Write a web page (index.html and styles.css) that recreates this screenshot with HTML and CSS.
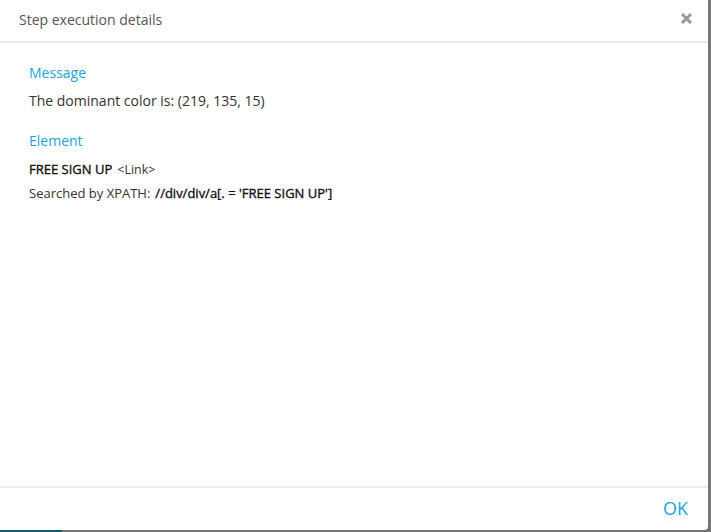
FILE: index.html
```html
<!DOCTYPE html>
<html>
<head>
<meta charset="utf-8">
<link rel="stylesheet" href="styles.css">
</head>
<body>
<div class="page">
  <div class="row">
    <div class="modal">
      <div class="modal-header">
        <span class="title">Step execution details</span>
        <span class="close" aria-label="close">
          <svg width="13" height="13" viewBox="0 0 13 13"><path d="M2 2 L11 11 M11 2 L2 11" stroke="#999" stroke-width="3" stroke-linecap="butt"/></svg>
        </span>
      </div>
      <div class="modal-body">
        <div class="section-title">Message</div>
        <div class="message">The dominant color is: (219, 135, 15)</div>
        <div class="section-title element-title">Element</div>
        <div class="el-line el-first"><span class="el-name">FREE SIGN UP</span><span class="el-type">&lt;Link&gt;</span></div>
        <div class="el-line searched"><span>Searched by XPATH:</span><span class="xpath">//div/div/a[. = 'FREE SIGN UP']</span></div>
      </div>
      <div class="modal-footer">
        <span class="ok">OK</span>
      </div>
    </div>
    <div class="side"></div>
  </div>
  <div class="bottom"><div class="teal"></div></div>
</div>
</body>
</html>
```
FILE: styles.css
```css
html, body {
  margin: 0;
  padding: 0;
  background: #767676;
  font-family: "Open Sans", "Liberation Sans", sans-serif;
}
.page {
  width: 711px;
  height: 532px;
  display: flex;
  flex-direction: column;
}
.row {
  display: flex;
  height: 530px;
}
.modal {
  width: 708px;
  height: 530px;
  background: #fff;
  border-bottom-right-radius: 4px;
  display: flex;
  flex-direction: column;
}
.side {
  flex: 1;
}
.modal-header {
  height: 41px;
  border-bottom: 2px solid #e4eef6;
  display: flex;
  align-items: center;
  justify-content: space-between;
  padding: 0 15px 0 19px;
}
.title {
  font-size: 14px;
  color: #555;
  position: relative;
  top: -1px;
}
.close {
  display: flex;
  width: 13px;
  height: 13px;
  position: relative;
  top: -2px;
}
.modal-body {
  flex: 1;
  padding: 20px 29px 0;
}
.section-title {
  font-size: 14px;
  color: #1da3dd;
  line-height: 20px;
}
.message {
  font-size: 14px;
  color: #333;
  margin-top: 8px;
  line-height: 20px;
}
.element-title {
  margin-top: 20px;
}
.el-line {
  font-size: 13px;
  color: #333;
  line-height: 18px;
  display: flex;
  gap: 5px;
  align-items: baseline;
}
.el-first {
  margin-top: 9px;
}
.el-name {
  color: #111;
  -webkit-text-stroke: 0.35px #111;
}
.el-type {
  font-size: 12.5px;
}
.searched {
  margin-top: 5px;
}
.xpath {
  color: #111;
  -webkit-text-stroke: 0.35px #111;
}
.modal-footer {
  height: 42px;
  border-top: 2px solid #e4eef6;
  display: flex;
  align-items: center;
  justify-content: flex-end;
  padding-right: 20px;
}
.ok {
  font-size: 18px;
  color: #1da3dd;
  position: relative;
  top: -1px;
}
.bottom {
  height: 2px;
  display: flex;
}
.teal {
  width: 62px;
  background: #0e5a78;
}
```
